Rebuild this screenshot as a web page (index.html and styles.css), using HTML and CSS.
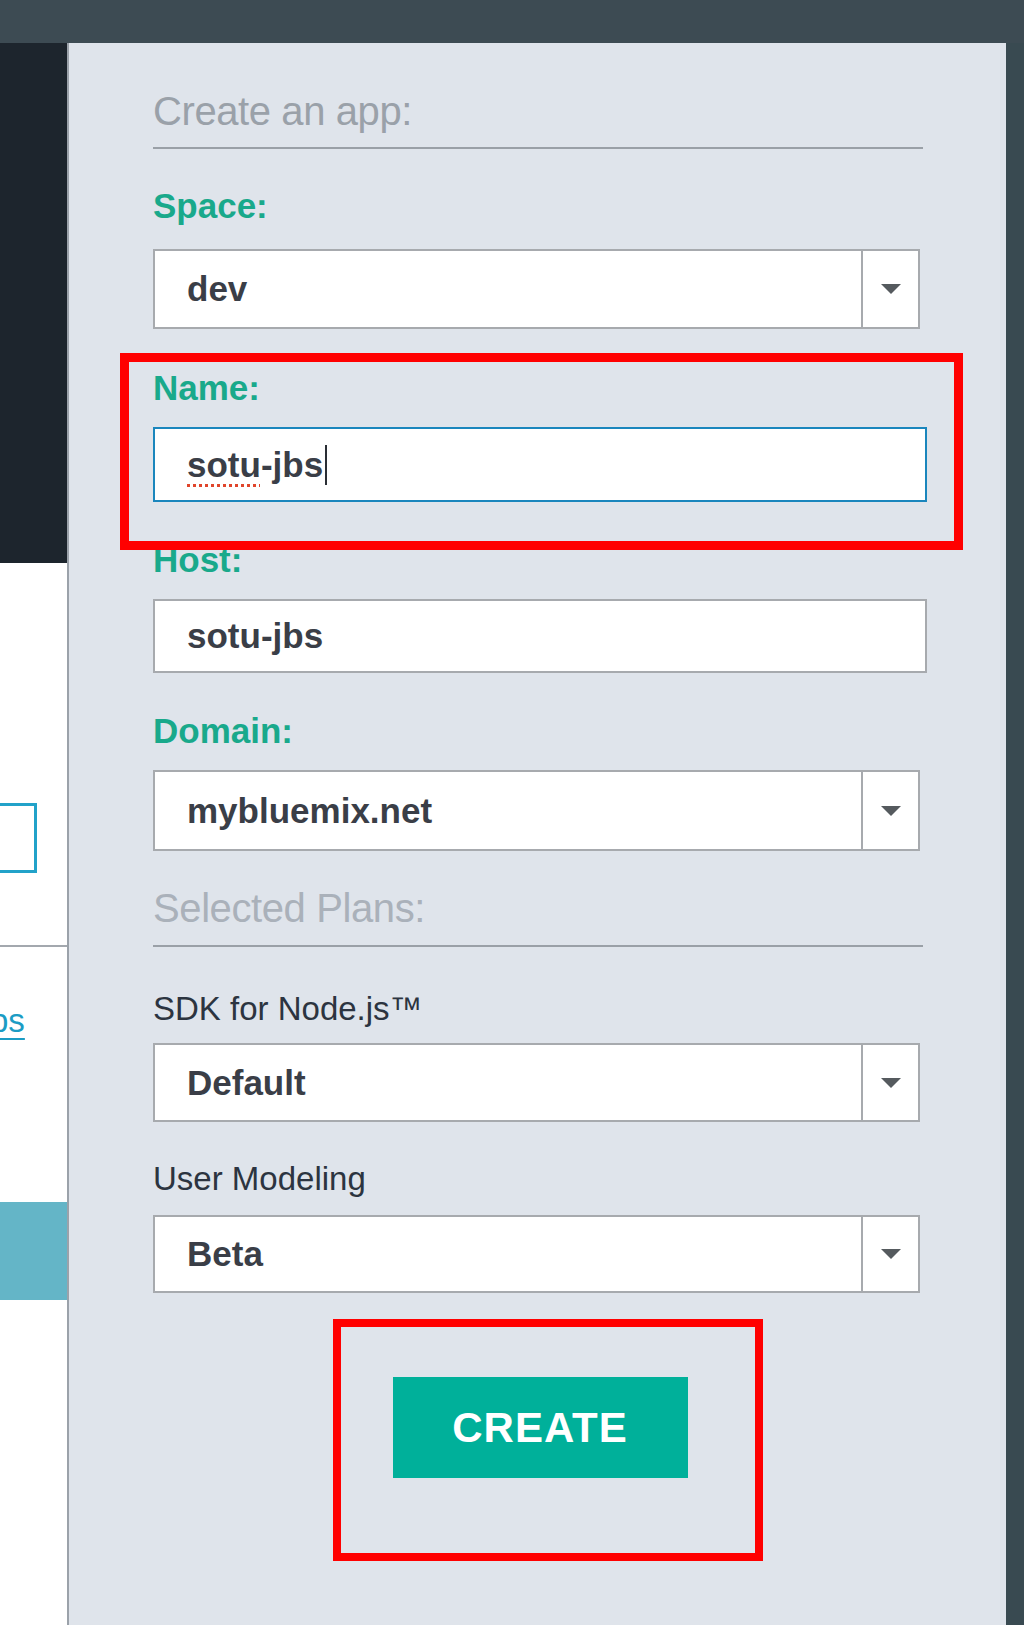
FILE: index.html
```html
<!DOCTYPE html>
<html lang="en">
<head>
<meta charset="utf-8">
<title>Create an app</title>
<link rel="stylesheet" href="styles.css">
</head>
<body>
<div class="topbar"></div>
<div class="main">
  <aside class="left">
    <div class="left-dark"></div>
    <div class="left-light">
      <div class="left-box"></div>
      <div class="left-rule"></div>
      <a class="left-link" href="#">ps</a>
      <div class="left-band"></div>
    </div>
  </aside>

  <section class="panel">
    <div class="form">
      <h2 class="section-title">Create an app:</h2>

      <div class="label label-space">Space:</div>
      <div class="select select-space">
        <span class="select-value">dev</span>
        <span class="select-btn"><svg width="20" height="10" viewBox="0 0 20 10"><polygon points="0,0 20,0 10,10" fill="#555a5e"/></svg></span>
      </div>

      <div class="label label-name">Name:</div>
      <div class="input input-focus"><span class="spell">sotu</span>-jbs<span class="caret"></span></div>

      <div class="label label-host">Host:</div>
      <div class="input input-host">sotu-jbs</div>

      <div class="label label-domain">Domain:</div>
      <div class="select select-domain">
        <span class="select-value">mybluemix.net</span>
        <span class="select-btn"><svg width="20" height="10" viewBox="0 0 20 10"><polygon points="0,0 20,0 10,10" fill="#555a5e"/></svg></span>
      </div>

      <h2 class="section-title plans-title">Selected Plans:</h2>

      <div class="plan-label plan-sdk">SDK for Node.js™</div>
      <div class="select select-default">
        <span class="select-value">Default</span>
        <span class="select-btn"><svg width="20" height="10" viewBox="0 0 20 10"><polygon points="0,0 20,0 10,10" fill="#555a5e"/></svg></span>
      </div>

      <div class="plan-label plan-user">User Modeling</div>
      <div class="select select-beta">
        <span class="select-value">Beta</span>
        <span class="select-btn"><svg width="20" height="10" viewBox="0 0 20 10"><polygon points="0,0 20,0 10,10" fill="#555a5e"/></svg></span>
      </div>

      <div class="actions">
        <button class="create-btn" type="button">CREATE</button>
      </div>
    </div>

    <div class="highlight highlight-name"></div>
    <div class="highlight highlight-create"></div>
  </section>

  <div class="right-strip"></div>
</div>
</body>
</html>
```

FILE: styles.css
```css
html, body {
  margin: 0;
  padding: 0;
}

body {
  width: 1024px;
  height: 1625px;
  overflow: hidden;
  background: #3c4a52;
  font-family: "Liberation Sans", Arial, Helvetica, sans-serif;
}

.topbar {
  height: 43px;
  background: #3d4b53;
}

.main {
  display: flex;
  height: 1582px;
}

/* left partial page */
.left {
  width: 67px;
  flex: none;
  display: flex;
  flex-direction: column;
}

.left-dark {
  height: 520px;
  background: #1d252d;
}

.left-light {
  flex: 1;
  background: #ffffff;
  overflow: hidden;
  display: flex;
  flex-direction: column;
}

.left-box {
  margin-top: 240px;
  width: 37px;
  height: 70px;
  border: 3px solid #22a2c9;
  border-left: none;
  box-sizing: border-box;
}

.left-rule {
  margin-top: 72px;
  height: 2px;
  background: #a3a8ae;
}

.left-link {
  margin-top: 54px;
  margin-left: -10px;
  font-size: 33px;
  line-height: 40px;
  color: #1b9cc4;
  text-decoration: underline;
  text-decoration-thickness: 2px;
  text-underline-offset: 6px;
  white-space: nowrap;
}

.left-band {
  margin-top: 161px;
  height: 98px;
  background: #64b5c7;
}

/* main panel */
.panel {
  position: relative;
  width: 939px;
  flex: none;
  box-sizing: border-box;
  border-left: 2px solid #9ba2aa;
  background: #dfe4eb;
  padding-left: 84px;
}

.form {
  width: 774px;
  display: flex;
  flex-direction: column;
}

.section-title {
  margin: 44px 0 0 0;
  width: 770px;
  font-size: 40px;
  line-height: 48px;
  font-weight: normal;
  letter-spacing: -0.4px;
  color: #9aa1a9;
  padding-bottom: 12px;
  border-bottom: 2px solid #9aa0a7;
}

.plans-title {
  margin-top: 33px;
  padding-bottom: 13px;
  color: #aab1ba;
}

.label {
  font-size: 35px;
  line-height: 40px;
  font-weight: bold;
  color: #19a98b;
}

.label-space { margin-top: 37px; }
.label-name { margin-top: 39px; }
.label-host { margin-top: 38px; }
.label-domain { margin-top: 38px; }

.plan-label {
  font-size: 33px;
  line-height: 40px;
  color: #2c3440;
}

.plan-sdk { margin-top: 42px; }
.plan-user { margin-top: 37px; }

.select {
  width: 767px;
  box-sizing: border-box;
  border: 2px solid #a7aaae;
  background: #ffffff;
  display: flex;
}

.select-space { margin-top: 23px; height: 80px; }
.select-domain { margin-top: 19px; height: 81px; }
.select-default { margin-top: 14px; height: 79px; }
.select-beta { margin-top: 16px; height: 78px; }

.select-value {
  flex: 1;
  display: flex;
  align-items: center;
  padding-left: 32px;
  font-size: 35px;
  font-weight: bold;
  color: #3a3e47;
}

.select-btn {
  width: 55px;
  flex: none;
  border-left: 2px solid #a7aaae;
  display: flex;
  align-items: center;
  justify-content: center;
}

.input {
  width: 774px;
  box-sizing: border-box;
  border: 2px solid #a7aaae;
  background: #ffffff;
  display: flex;
  align-items: center;
  padding-left: 32px;
  font-size: 35px;
  font-weight: bold;
  color: #3a3e47;
}

.input-focus {
  margin-top: 19px;
  height: 75px;
  border-color: #1a86bd;
}

.input-host {
  margin-top: 19px;
  height: 74px;
}

.spell {
  text-decoration: underline dotted #e0452b;
  text-decoration-thickness: 3px;
  text-underline-offset: 7px;
}

.caret {
  display: inline-block;
  width: 2px;
  height: 40px;
  margin-left: 2px;
  background: #2a2e35;
}

.actions {
  margin-top: 84px;
  display: flex;
  justify-content: center;
}

.create-btn {
  width: 295px;
  height: 101px;
  border: none;
  background: #00b09a;
  color: #ffffff;
  font-family: "Liberation Sans", Arial, Helvetica, sans-serif;
  font-size: 42px;
  font-weight: bold;
  letter-spacing: 1px;
  padding: 0;
}

/* annotation overlays */
.highlight {
  position: absolute;
  box-sizing: border-box;
  border: 9px solid #ff0000;
  z-index: 2;
}

.highlight-name {
  left: 51px;
  top: 310px;
  width: 843px;
  height: 197px;
}

.highlight-create {
  left: 264px;
  top: 1276px;
  width: 430px;
  height: 242px;
  border-width: 8px;
}

.right-strip {
  flex: 1;
  background: #394a51;
}
```
